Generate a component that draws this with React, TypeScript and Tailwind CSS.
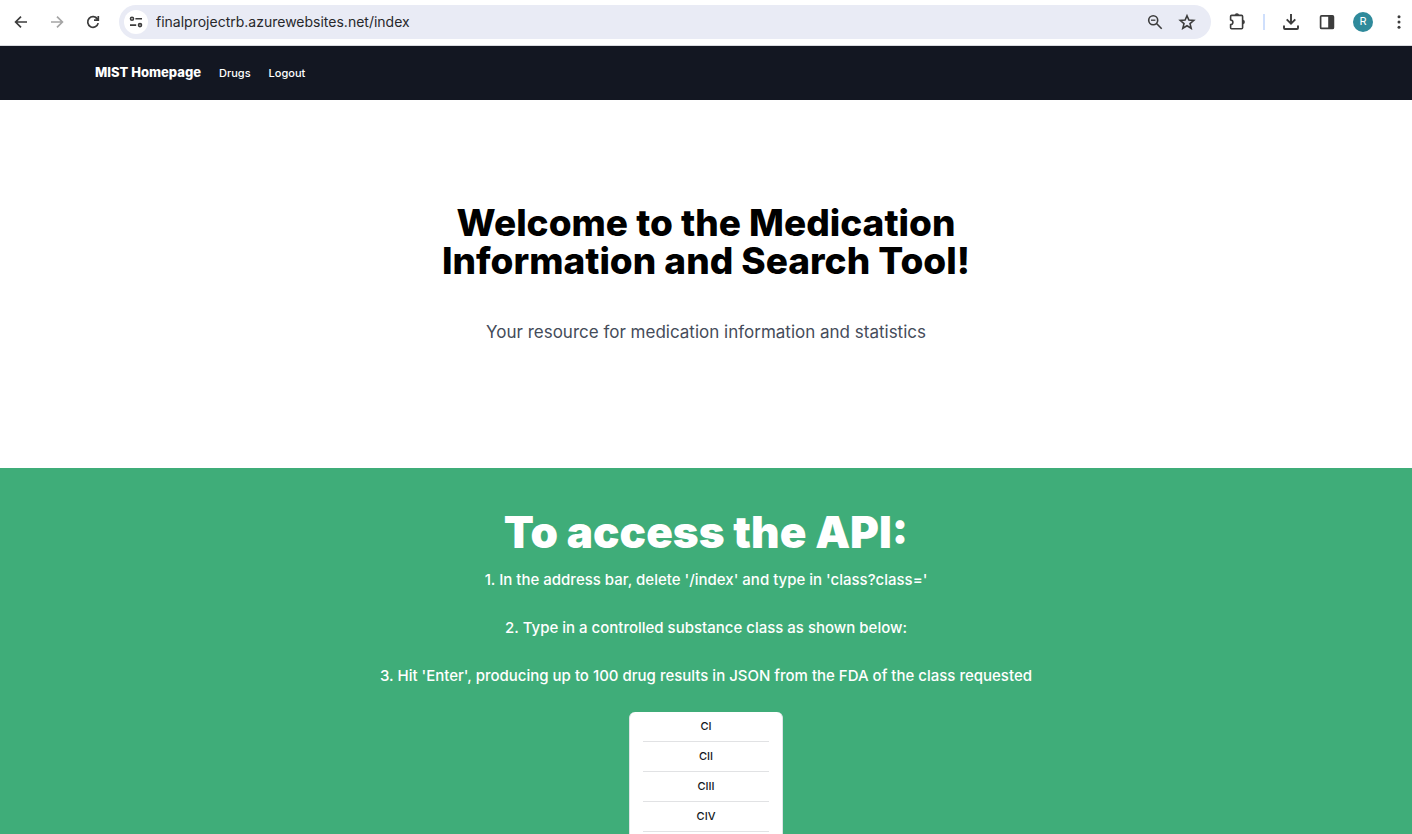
import React from "react";

const DRUG_CLASSES = ["CI", "CII", "CIII", "CIV"];

const STEPS = [
  "1. In the address bar, delete '/index' and type in 'class?class='",
  "2. Type in a controlled substance class as shown below:",
  "3. Hit 'Enter', producing up to 100 drug results in JSON from the FDA of the class requested",
];

function IconButton({ label, children }: { label: string; children: React.ReactNode }) {
  return (
    <button type="button" aria-label={label} className="flex size-5 shrink-0 items-center justify-center text-[#3c3c3c]">
      {children}
    </button>
  );
}

function BrowserBar() {
  return (
    <header className="flex h-[46px] shrink-0 items-center border-b border-[#d9dbe0] bg-white pb-1.5 pt-1">
      <div className="flex w-[119px] shrink-0 items-center gap-4 pl-[11px]">
        <IconButton label="Back">
          <svg width="20" height="20" viewBox="0 0 20 20" fill="none" stroke="currentColor" strokeWidth="1.7">
            <path d="M16 10H5M10 4.6 4.6 10l5.4 5.4" />
          </svg>
        </IconButton>
        <IconButton label="Forward">
          <svg width="20" height="20" viewBox="0 0 20 20" fill="none" stroke="#a5a5a5" strokeWidth="1.7">
            <path d="M4 10h11M10 4.6l5.4 5.4-5.4 5.4" />
          </svg>
        </IconButton>
        <IconButton label="Reload">
          <svg width="20" height="20" viewBox="0 0 20 20" fill="none" stroke="currentColor" strokeWidth="1.7">
            <path d="M15.2 11.1a5.3 5.3 0 1 1-.7-4" />
            <path d="M15.3 3.9v4.3H11" />
            <path d="M14.9 7.8l-2-2.1" />
          </svg>
        </IconButton>
      </div>
      <div className="flex h-[34px] min-w-0 flex-1 items-center rounded-full bg-[#e9ebf5] pl-[5px] pr-3.5">
        <button
          type="button"
          aria-label="View site information"
          className="flex size-6 shrink-0 items-center justify-center rounded-full bg-white text-[#3c3c3c]"
        >
          <svg width="16" height="16" viewBox="0 0 16 16" fill="none" stroke="currentColor" strokeWidth="1.6">
            <circle cx="4" cy="4.7" r="1.5" />
            <path d="M7.4 4.7H14M2 11.1h6.2" />
            <circle cx="12" cy="11.1" r="1.5" />
          </svg>
        </button>
        <input
          type="text"
          aria-label="Address"
          defaultValue="finalprojectrb.azurewebsites.net/index"
          className="ml-2 min-w-0 flex-1 bg-transparent text-sm text-[#27282b] outline-none"
        />
        <div className="flex items-center gap-3">
          <IconButton label="Zoom">
            <svg width="20" height="20" viewBox="0 0 20 20" fill="none" stroke="currentColor" strokeWidth="1.6">
              <circle cx="8.2" cy="8.2" r="4.5" />
              <path d="M11.5 11.5l5.2 5.2" />
              <path d="M6 8.2h4.4" strokeWidth="1.3" />
            </svg>
          </IconButton>
          <IconButton label="Bookmark">
            <svg width="20" height="20" viewBox="0 0 20 20" fill="none" stroke="currentColor" strokeWidth="1.6">
              <path d="M10 3.7l1.9 4.4 4.8.4-3.7 3.1 1.2 4.7-4.2-2.5-4.2 2.5L7 11.6 3.3 8.5l4.8-.4z" />
            </svg>
          </IconButton>
        </div>
      </div>
      <div className="flex shrink-0 items-center gap-4 pl-4 pr-[3px]">
        <IconButton label="Extensions">
          <svg width="20" height="20" viewBox="0 0 20 20" fill="none" stroke="currentColor" strokeWidth="1.6" strokeLinejoin="round">
            <path d="M4.6 3.4h10a1 1 0 0 1 1 1v11.4a1 1 0 0 1-1 1h-10a1 1 0 0 1-1-1v-3.2a2.1 2.1 0 0 0 0-4.6V4.4a1 1 0 0 1 1-1z" />
            <path d="M8 3a1.9 1.6 0 0 1 3.8 0zM16 8.1a1.6 1.9 0 0 1 0 3.8z" fill="currentColor" strokeWidth="0.5" />
          </svg>
        </IconButton>
        <div className="h-4 w-0.5 bg-[#cfdffc]" />
        <IconButton label="Downloads">
          <svg width="20" height="20" viewBox="0 0 20 20" fill="none" stroke="currentColor" strokeWidth="1.9">
            <path d="M10 2v9.4M5.7 7.4 10 11.7l4.3-4.3" />
            <path d="M3 13.6v2.4a1 1 0 0 0 1 1h12a1 1 0 0 0 1-1v-2.4" />
          </svg>
        </IconButton>
        <IconButton label="Side panel">
          <svg width="20" height="20" viewBox="0 0 20 20">
            <rect x="3.6" y="3.8" width="12.8" height="12.6" rx="1" fill="none" stroke="currentColor" strokeWidth="1.7" />
            <path d="M11.2 3.8h5.2v12.6h-5.2z" fill="currentColor" />
          </svg>
        </IconButton>
        <button
          type="button"
          aria-label="Profile"
          className="flex size-5 shrink-0 items-center justify-center rounded-full bg-[#2f8a9b] text-[11px] text-white"
        >
          R
        </button>
        <IconButton label="Menu">
          <svg width="20" height="20" viewBox="0 0 20 20" fill="currentColor">
            <circle cx="10" cy="4.8" r="1.5" />
            <circle cx="10" cy="10" r="1.5" />
            <circle cx="10" cy="15.2" r="1.5" />
          </svg>
        </IconButton>
      </div>
    </header>
  );
}

function SiteNav() {
  return (
    <nav className="bg-[#131722]">
      <div className="mx-auto flex h-[54px] max-w-[1222px] items-center gap-[18px] text-[11px] font-medium text-white">
        <a href="#home" className="text-[13px] font-extrabold">
          MIST Homepage
        </a>
        <a href="#drugs">Drugs</a>
        <a href="#logout">Logout</a>
      </div>
    </nav>
  );
}

export default function App() {
  return (
    <div className="flex h-screen flex-col bg-white font-['Inter','Liberation_Sans',sans-serif]">
      <BrowserBar />
      <div className="min-h-0 flex-1 overflow-y-auto [scrollbar-width:none]">
        <SiteNav />
        <main className="text-center">
          <section className="flex flex-col items-center px-6 pb-[122px] pt-[104px]">
            <h1 className="max-w-[560px] text-[37px] font-extrabold leading-[38px] text-black">
              Welcome to the Medication Information and Search Tool!
            </h1>
            <p className="mt-[38px] text-[17px] leading-7 text-[#454c5a]">
              Your resource for medication information and statistics
            </p>
          </section>
          <section className="flex flex-col items-center bg-[#3fad79] px-6 pb-16 pt-10 text-white">
            <h2 className="text-[44px] font-black leading-[48px]">To access the API:</h2>
            <div className="mt-3 flex flex-col gap-6 text-[15px] font-medium leading-6">
              {STEPS.map((step) => (
                <p key={step}>{step}</p>
              ))}
            </div>
            <ul className="mt-6 w-[154px] rounded-md border-x border-[#dfe3e6] bg-white px-[13px] pb-3 text-[11px] font-medium text-[#131722]">
              {DRUG_CLASSES.map((name) => (
                <li key={name} className="flex h-[30px] items-center justify-center border-b border-[#e1e2e4]">
                  {name}
                </li>
              ))}
            </ul>
          </section>
        </main>
      </div>
    </div>
  );
}
